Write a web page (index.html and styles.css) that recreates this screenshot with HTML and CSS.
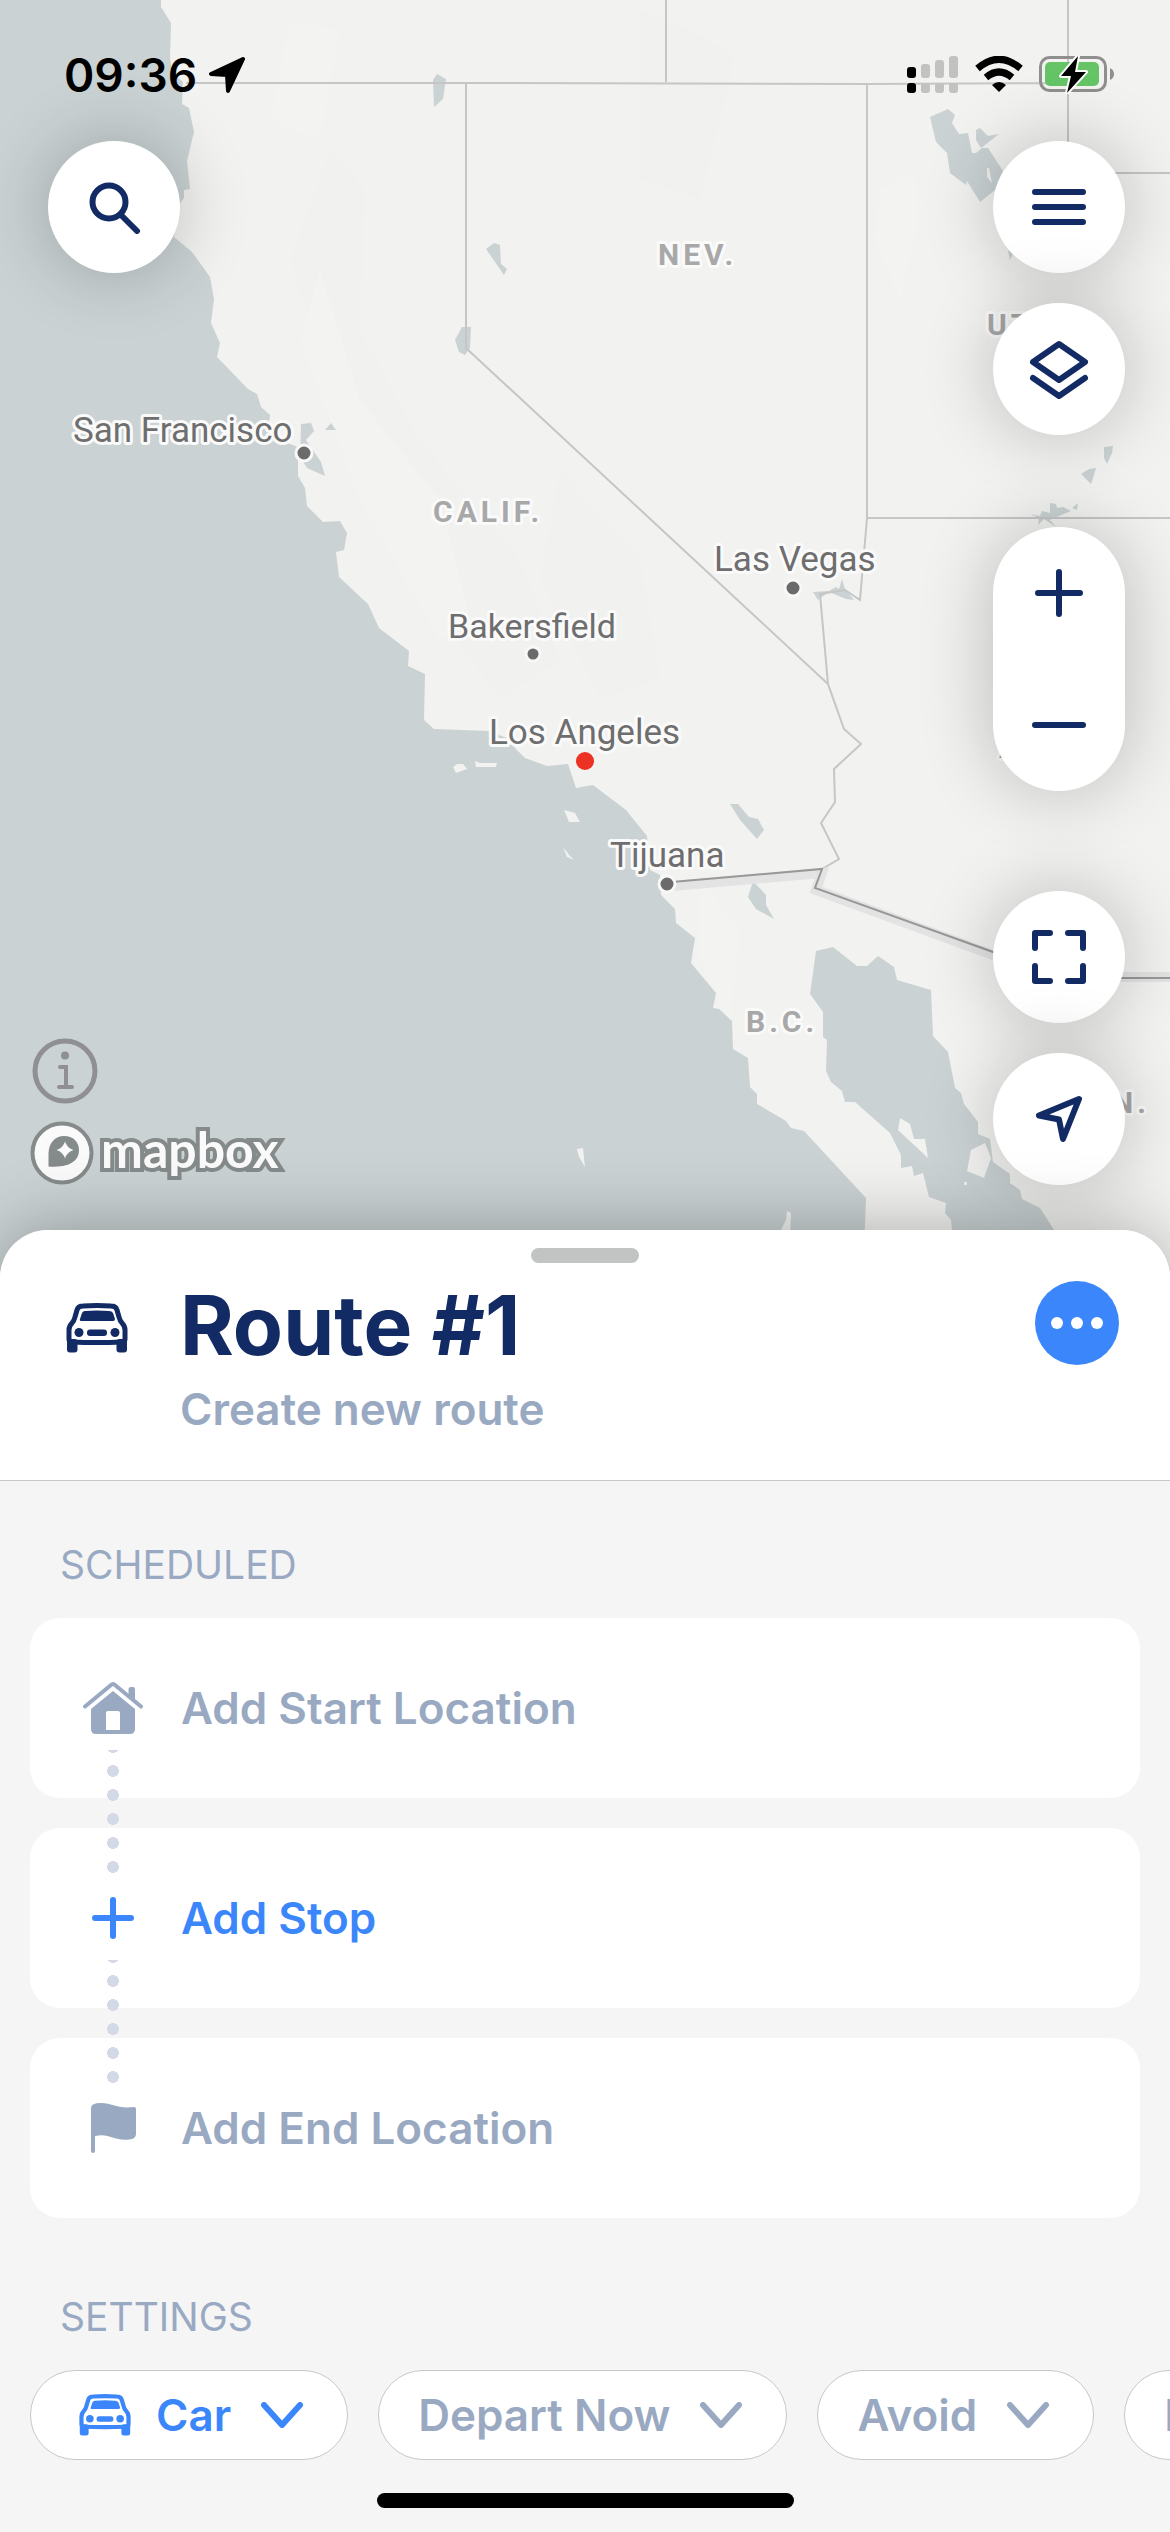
FILE: index.html
```html
<!DOCTYPE html>
<html lang="en">
<head>
<meta charset="utf-8">
<meta name="viewport" content="width=device-width, initial-scale=1">
<title>Route planner</title>
<link rel="stylesheet" href="styles.css">
</head>
<body>
<svg class="symbols" aria-hidden="true">
  <symbol id="car" viewBox="0 0 62 50">
    <path d="M3 36V27Q3 23 6 20Q8 18 9 14L11 7Q12 3 17 3Q31 2 45 3Q50 3 51 7L53 14Q54 18 56 20Q59 23 59 27V36Q59 39 56 39Q31 40 6 39Q3 39 3 36Z" fill="none" stroke="currentColor" stroke-width="5"/>
    <path d="M19 8Q31 7 43 8Q46 8 47 10L49 16Q49 18 47 18H16Q13 18 14 16L16 10Q17 8 19 8Z" fill="currentColor"/>
    <circle cx="13" cy="29.500" r="4.500" fill="currentColor"/>
    <circle cx="49" cy="29.500" r="4.500" fill="currentColor"/>
    <rect x="21" y="26.500" width="20" height="6.500" rx="3" fill="currentColor"/>
    <rect x="1" y="36" width="10.500" height="13.500" rx="3" fill="currentColor"/>
    <rect x="50.500" y="36" width="10.500" height="13.500" rx="3" fill="currentColor"/>
  </symbol>
  <symbol id="chevron" viewBox="0 0 42 26">
    <path d="M3 3L21 23L39 3" fill="none" stroke="currentColor" stroke-width="6" stroke-linecap="round" stroke-linejoin="round"/>
  </symbol>
</svg>

<main class="app">
  <section class="map" aria-label="Map">
    <svg class="map-canvas" viewBox="0 0 1170 1278" preserveAspectRatio="xMidYMin slice" role="img" aria-label="Map of California and Nevada">
      <rect class="water" width="1170" height="1278"/>
      <path class="land" d="M161 0L161 7L171 23L170 57L172 72L183 82L182 104L189 108L194 132L187 161L190 189L184 190L184 198L180 203L174 237L192 252L210 277L214 299L211 323L220 343L217 357L248 389L257 394L261 407L270 415L269 425L279 440L298 447L298 476L305 488L307 506L323 522L340 521L347 533L344 550L336 552L339 577L368 604L379 628L409 651L408 666L425 674L424 720L434 729L488 731L507 738L515 748L525 758L547 766L568 764L576 788L593 785L626 810L647 836L650 870L660 875L661 895L675 909L676 923L695 938L691 963L716 993L713 1008L719 1009L732 1021L733 1049L748 1058L750 1087L757 1094L757 1104L786 1121L791 1128L804 1131L866 1198L865 1225L862 1278H1170V0Z"/>
      <path class="relief" d="M330 150L365 190L360 330L420 440L520 560L560 660L500 700L400 560L340 420L290 260ZM640 10L690 30L735 55L700 200L640 180ZM560 470L640 560L660 680L600 700L540 580Z"/>
      <path class="relief-light" d="M320 270L360 400L440 500L470 620L440 640L360 500L300 340ZM880 190L915 170L918 220L900 300L875 240ZM290 20L340 30L320 140L270 120ZM700 880L740 930L730 1020L700 960Z"/>
      <path class="water" d="M816 951L833 947L857 966H867L878 956L894 967L897 980L931 990L933 1036L948 1052L955 1088L961 1093L964 1104L978 1122V1134L990 1139L993 1162L1010 1174V1183L1020 1190L1022 1199L1040 1208L1054 1230L1070 1278H955L952 1230L951 1220L945 1213L946 1203L929 1197L923 1173L914 1176L912 1166L901 1168V1155L890 1133L855 1102H845L842 1091L831 1082L826 1071L827 1040L823 1037V1012L810 994Z"/>
      <path class="land" d="M900 1118L910 1124L914 1139H925L928 1158L898 1130ZM971 1150L985 1143L991 1158L984 1178L967 1171ZM964 1182H967V1185H964ZM787 1211L791 1213L790 1240H776L786 1220ZM453 767L457 764H463L467 769L456 773ZM475 761L480 763H497L496 767H476ZM564 810L575 813L580 822H569ZM563 847L570 856L574 860L567 857ZM577 1149L583 1148L585 1167L579 1157Z"/>
      <path class="water" d="M930 117L948 109L955 115L952 123L959 134L968 133L972 153H976L982 148H988L1003 171L995 190L980 202L967 181L966 185L950 173L947 153L936 142ZM976 130L980 128L988 136L999 134L981 148L976 140ZM1008 250L1013 254L1010 260ZM462 327H471L470 348L465 355L459 352L455 340ZM486 249L494 243L500 245L501 264L507 269L504 275ZM437 74L446 79L443 99L434 107L433 80ZM813 592L829 591L836 587L839 589L842 579L845 589L854 600L846 599L841 597L829 592L818 600ZM1030 514L1040 516L1042 511L1050 513L1050 503L1056 504L1057 508L1063 507L1071 511L1059 516L1050 520L1056 527L1044 519L1038 525L1039 518ZM1072 508L1078 503L1077 510ZM1081 474L1089 469L1096 468L1094 475L1091 484ZM1104 447L1113 446L1112 453L1107 464L1104 458ZM730 804H738L749 817L758 819L764 830L757 839L740 820ZM753 881L766 895V905L774 919L756 909L748 897ZM301 424L311 423L314 431L306 440L321 462L325 476L307 468L300 457ZM325 430L331 423L336 430Z"/>
      <path class="land" d="M987 168H989L992 183L987 177Z"/>
      <path class="border" d="M186 83L466 83L867 84L1068 83M466 83V348L828 684M666 0V82M867 83V518L860 600L845 590L820 594L828 684L844 729L861 744L834 769L835 802L821 823L839 859L822 869M867 518H1170M1068 0V173H1170"/>
      <path class="nation-casing" d="M672 886L822 873L816 890L993 955L1060 977H1170"/>
      <path class="nation" d="M672 882L822 869L815 888L993 952L1060 978H1170"/>
      <g class="dots">
        <circle cx="304" cy="453" r="8"/>
        <circle cx="793" cy="588" r="8"/>
        <circle cx="533" cy="654" r="7"/>
        <circle cx="667" cy="884" r="8"/>
      </g>
      <g class="city">
        <text x="73" y="442">San Francisco</text>
        <text x="714" y="571">Las Vegas</text>
        <text class="town" x="448" y="638">Bakersfield</text>
        <text x="489" y="744">Los Angeles</text>
        <text x="610" y="867">Tijuana</text>
      </g>
      <circle class="position" cx="585" cy="761" r="9"/>
      <g class="state">
        <text x="658" y="265">NEV.</text>
        <text x="433" y="522">CALIF.</text>
        <text x="987" y="335">UTAH</text>
        <text x="999" y="758">ARIZ.</text>
        <text x="746" y="1032">B.C.</text>
        <text x="1150" y="1113" text-anchor="end">SON.</text>
      </g>
    </svg>

    <div class="status">
      <span class="clock">09:36</span>
      <svg class="locate" width="36" height="36" viewBox="0 0 36 36" aria-hidden="true"><path d="M34 2L2 17L18 18L19 34Z" fill="#000" stroke="#000" stroke-width="4" stroke-linejoin="round"/></svg>
      <div class="status-icons">
        <svg width="52" height="38" viewBox="0 0 52 38" aria-hidden="true">
          <g fill="#c2c2c1"><rect x="14" y="8" width="9" height="14" rx="3"/><rect x="28" y="4" width="9" height="18" rx="3"/><rect x="42" y="0" width="9" height="22" rx="3"/><rect x="14" y="27" width="9" height="10" rx="3"/><rect x="28" y="27" width="9" height="10" rx="3"/><rect x="42" y="27" width="9" height="10" rx="3"/></g>
          <rect x="0" y="11" width="9" height="11" rx="3"/><rect x="0" y="27" width="9" height="10" rx="3"/>
        </svg>
        <svg width="48" height="38" viewBox="0 0 48 38" aria-hidden="true">
          <path d="M2.500 12.500Q24 -6 45.500 12.500" fill="none" stroke="#000" stroke-width="7"/>
          <path d="M11 21.500Q24 10.500 37 21.500" fill="none" stroke="#000" stroke-width="7"/>
          <path d="M24 36L17 29Q24 23 31 29Z"/>
        </svg>
        <svg width="76" height="38" viewBox="0 0 76 38" aria-hidden="true">
          <rect x="1.500" y="1.500" width="65" height="33" rx="9" fill="none" stroke="#8f8f8f" stroke-width="3"/>
          <path d="M71 12Q75 14 75 18T71 24Z" fill="#8f8f8f"/>
          <rect x="6" y="6" width="54" height="24" rx="5" fill="#65c466"/>
          <path d="M39 0L22 20H32L28 37L47 16H36Z" stroke="#fff" stroke-width="4" stroke-linejoin="round" paint-order="stroke"/>
        </svg>
      </div>
    </div>

    <div class="controls">
      <div class="side side-left">
        <button class="round search" type="button" aria-label="Search">
          <svg width="54" height="54" viewBox="0 0 54 54"><g class="line"><circle cx="22" cy="22" r="16.500"/><path d="M34 35L50 51"/></g></svg>
        </button>
        <div class="attribution">
          <button class="info" type="button" aria-label="Map information">
            <svg width="66" height="66" viewBox="0 0 66 66"><g fill="none" stroke="#8f8f94" stroke-width="5"><circle cx="33" cy="33" r="30"/><path d="M28 29H34V49M27 49H40" stroke-width="4" stroke-linecap="round"/></g><circle cx="33" cy="17.500" r="4" fill="#8f8f94"/></svg>
          </button>
          <a class="mapbox" href="#mapbox" aria-label="Mapbox">
            <svg width="64" height="64" viewBox="0 0 64 64" aria-hidden="true"><circle cx="32" cy="32" r="29.500" fill="#fafafa" stroke="#858a8a" stroke-width="4"/><path d="M18.500 45.500V33C18.500 22 25 15 34 15C43 15 49 21 49 29C49 39 41 47 18.500 45.500Z" fill="#858a8a"/><path d="M35 20.500Q37 27 43.500 29Q37 31 35 37.500Q33 31 26.500 29Q33 27 35 20.500Z" fill="#fafafa"/></svg>
            <span class="wordmark">mapbox</span>
          </a>
        </div>
      </div>
      <div class="side side-right">
        <button class="round" type="button" aria-label="Menu">
          <svg width="54" height="36" viewBox="0 0 54 36"><path class="line" d="M3 3H51M3 18H51M3 33H51"/></svg>
        </button>
        <button class="round layers" type="button" aria-label="Layers">
          <svg width="60" height="62" viewBox="0 0 60 62"><path class="line" d="M30 6L56 24L30 42L4 24ZM4 40L30 58L56 40"/></svg>
        </button>
        <div class="zoom">
          <button type="button" aria-label="Zoom in"><svg width="48" height="48" viewBox="0 0 48 48"><path class="line" d="M24 3V45M3 24H45"/></svg></button>
          <button type="button" aria-label="Zoom out"><svg width="54" height="6" viewBox="0 0 54 6"><path class="line" d="M3 3H51"/></svg></button>
        </div>
        <button class="round fit" type="button" aria-label="Fit route">
          <svg width="54" height="54" viewBox="0 0 54 54"><path class="line" d="M18 3H3V18M36 3H51V18M3 36V51H18M51 36V51H36"/></svg>
        </button>
        <button class="round" type="button" aria-label="My location">
          <svg width="48" height="48" viewBox="0 0 48 48"><path class="line" d="M44 4L4 20.500L24 24.500L28 44Z"/></svg>
        </button>
      </div>
    </div>
  </section>

  <section class="sheet">
    <header class="route">
      <span class="handle"></span>
      <svg class="route-icon" width="62" height="50"><use href="#car"/></svg>
      <div class="route-text">
        <h1>Route #1</h1>
        <p>Create new route</p>
      </div>
      <button class="more" type="button" aria-label="More">
        <svg width="54" height="14" viewBox="0 0 54 14" fill="#fff"><circle cx="7" cy="7" r="6"/><circle cx="27" cy="7" r="6"/><circle cx="47" cy="7" r="6"/></svg>
      </button>
    </header>

    <h2>SCHEDULED</h2>
    <ol class="stops">
      <li>
        <button class="stop" type="button">
          <span class="stop-icon"><svg width="60" height="54" viewBox="0 0 60 54"><path d="M2 25.500L28 4Q30 2 32 4L58 25.500" fill="none" stroke="currentColor" stroke-width="4" stroke-linecap="round"/><path d="M45.500 14V8Q45.500 6 48 6H50Q52 6 52 8V20Z" fill="currentColor"/><path d="M30 10L52 28V48Q52 53 47 53H13Q8 53 8 48V28ZM23 32V49H37V32Q37 30 35 30H25Q23 30 23 32Z" fill="currentColor" fill-rule="evenodd"/></svg></span>
          Add Start Location
        </button>
      </li>
      <li>
        <span class="connector"></span>
        <button class="stop active" type="button">
          <span class="stop-icon"><svg width="42" height="42" viewBox="0 0 42 42"><path d="M21 3V39M3 21H39" fill="none" stroke="currentColor" stroke-width="6" stroke-linecap="round"/></svg></span>
          Add Stop
        </button>
      </li>
      <li>
        <span class="connector"></span>
        <button class="stop" type="button">
          <span class="stop-icon"><svg width="45" height="50" viewBox="0 0 45 50"><path d="M0 5Q0 0 10 0C22 0 26 6 43 4Q45 4 45 6V31Q45 36 38 36.500C22 38 19 30 4 33V48Q4 50 2 50T0 48Z" fill="currentColor"/></svg></span>
          Add End Location
        </button>
      </li>
    </ol>

    <h2 class="settings-title">SETTINGS</h2>
    <div class="pills">
      <button class="pill active" type="button"><svg class="pill-car" width="54" height="42"><use href="#car"/></svg>Car<svg class="chevron" width="42" height="26"><use href="#chevron"/></svg></button>
      <button class="pill" type="button">Depart Now<svg class="chevron" width="42" height="26"><use href="#chevron"/></svg></button>
      <button class="pill" type="button">Avoid<svg class="chevron" width="42" height="26"><use href="#chevron"/></svg></button>
      <button class="pill" type="button">Return<svg class="chevron" width="42" height="26"><use href="#chevron"/></svg></button>
    </div>
    <div class="home-indicator"></div>
  </section>
</main>
</body>
</html>
```
FILE: styles.css
```css
* {
  box-sizing: border-box;
}

body {
  margin: 0;
  background: #f5f5f6;
  color: #9aa9c2;
  font-family: Inter, Roboto, "Liberation Sans", sans-serif;
}

button {
  display: flex;
  align-items: center;
  justify-content: center;
  padding: 0;
  border: 0;
  background: none;
  color: inherit;
  font: inherit;
}

h1, h2, p, ol {
  margin: 0;
  padding: 0;
}

.symbols {
  position: absolute;
  width: 0;
  height: 0;
}

.app {
  display: flex;
  flex-direction: column;
  min-height: 100vh;
  overflow: hidden;
}

/* Map */
.map {
  position: relative;
  display: flex;
  flex: 1;
  flex-direction: column;
}

.map-canvas {
  position: absolute;
  inset: 0;
  width: 100%;
  height: 100%;
}

.water { fill: #cad2d3; }
.land { fill: #f2f2f0; }
.relief { fill: #f1f1ef; }
.relief-light { fill: #f3f3f1; }

.border,
.nation,
.nation-casing {
  fill: none;
  stroke: #c6c6c6;
  stroke-width: 2;
}

.nation { stroke: #989898; }

.nation-casing {
  stroke: #e3e3e3;
  stroke-width: 10;
}

.dots {
  fill: #6b6b6b;
  stroke: #f8f8f8;
  stroke-width: 3;
}

.position { fill: #ec3323; }

.city,
.state {
  font-family: Roboto, "Liberation Sans", sans-serif;
  paint-order: stroke;
  stroke: #fafafa;
  stroke-width: 6;
  stroke-linejoin: round;
}

.city {
  fill: #6e6e6e;
  font-size: 35px;
}

.city .town { font-size: 34px; }

.state {
  fill: #a8a8a8;
  font-size: 30px;
  font-weight: 700;
  letter-spacing: 4px;
}

.status {
  position: relative;
  display: flex;
  align-items: center;
  padding: 56px 55px 0 64px;
}

.clock {
  color: #000;
  font-size: 46px;
  font-weight: 600;
  line-height: 38px;
}

.locate { margin-left: 12px; }

.status-icons {
  display: flex;
  gap: 16px;
  margin-left: auto;
}

.controls {
  position: relative;
  display: flex;
  flex: 1;
  justify-content: space-between;
  padding: 47px 45px 93px 30px;
}

.side {
  display: flex;
  flex-direction: column;
}

.side-left { justify-content: space-between; }

.round,
.zoom {
  border-radius: 66px;
  background: #fff;
  box-shadow: 0 0 72px rgba(0, 0, 0, 0.24);
}

.round {
  width: 132px;
  height: 132px;
}

.line {
  fill: none;
  stroke: #122b64;
  stroke-width: 6;
  stroke-linecap: round;
  stroke-linejoin: round;
}

.search { margin-left: 18px; }
.layers { margin: 30px 0 92px; }
.fit { margin: 100px 0 30px; }

.zoom button {
  width: 132px;
  height: 132px;
}

.attribution {
  display: flex;
  flex-direction: column;
  align-items: flex-start;
  gap: 17px;
}

.info { margin-left: 2px; }

.mapbox {
  display: flex;
  align-items: flex-start;
  gap: 7px;
  color: #fafafa;
  text-decoration: none;
}

.wordmark {
  font-family: Lato, "Open Sans", sans-serif;
  font-size: 50px;
  font-weight: 700;
  line-height: 56px;
  paint-order: stroke;
  stroke-linejoin: round;
  -webkit-text-stroke: 8px #858a8a;
}

/* Bottom sheet */
.sheet {
  position: relative;
  margin-top: -48px;
  border-radius: 48px 48px 0 0;
  background: #f5f5f6;
  box-shadow: 0 0 72px rgba(0, 0, 0, 0.3);
}

.route {
  position: relative;
  display: flex;
  align-items: flex-start;
  padding: 48px 51px 45px 66px;
  border-bottom: 1px solid #c8c8c8;
  border-radius: 48px 48px 0 0;
  background: #fff;
}

.handle {
  position: absolute;
  top: 18px;
  left: calc(50% - 54px);
  width: 108px;
  height: 15px;
  border-radius: 8px;
  background: #c2c3c3;
}

.route-icon {
  margin-top: 25px;
  color: #122b64;
}

.route-text {
  flex: 1;
  margin-left: 52px;
}

h1 {
  color: #122b64;
  font-size: 82px;
  font-weight: 700;
  line-height: 96px;
}

.route p {
  margin-top: 9px;
  font-size: 44px;
  font-weight: 600;
  line-height: 52px;
}

.more {
  width: 84px;
  height: 84px;
  margin-top: 3px;
  border-radius: 50%;
  background: #3b86fa;
}

h2 {
  padding: 60px 60px 29px;
  font-size: 39px;
  font-weight: 400;
  line-height: 48px;
}

.settings-title { padding-top: 75px; }

.stops {
  display: flex;
  flex-direction: column;
  gap: 30px;
  padding: 0 30px;
  list-style: none;
}

.stops li { position: relative; }

.stop {
  justify-content: flex-start;
  gap: 35px;
  width: 100%;
  height: 180px;
  padding-left: 50px;
  border-radius: 30px;
  background: #fff;
  font-size: 44px;
  font-weight: 600;
}

.stop-icon {
  display: flex;
  justify-content: center;
  width: 66px;
}

.stop.active,
.pill.active { color: #3b86fa; }

/* Dotted line that joins a stop to the one above it */
.connector {
  position: absolute;
  top: -78px;
  left: 77px;
  width: 12px;
  height: 123px;
  background: radial-gradient(circle at 6px 18px, #d3dae5 6px, transparent 6px) 0 100% / 12px 24px;
}

.pills {
  display: flex;
  gap: 30px;
  padding-left: 30px;
  overflow: hidden;
}

.pill {
  flex: none;
  height: 90px;
  padding: 0 44px 0 39px;
  border: 1px solid #c8c8c8;
  border-radius: 45px;
  background: #fff;
  font-size: 44px;
  font-weight: 600;
}

.pill-car { margin: 0 24px 0 8px; }
.chevron { margin-left: 30px; }

.home-indicator {
  width: 417px;
  height: 15px;
  margin: 33px auto 24px;
  border-radius: 8px;
  background: #000;
}
```
